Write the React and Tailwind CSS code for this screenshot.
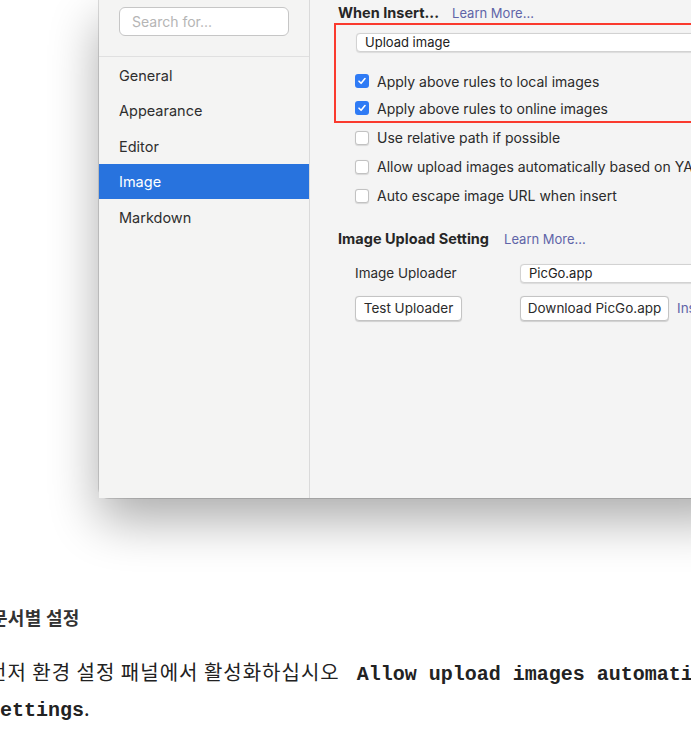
import React from "react";

function Check({ checked }) {
  if (checked) {
    return (
      <div className="w-[14px] h-[14px] rounded-[3px] bg-[#2f7bf5] flex items-center justify-center shrink-0">
        <svg width="10" height="10" viewBox="0 0 10 10" fill="none">
          <path d="M2 5.2 L4.1 7.3 L8 2.6" stroke="white" strokeWidth="1.6" strokeLinecap="round" strokeLinejoin="round" />
        </svg>
      </div>
    );
  }
  return <div className="w-[14px] h-[14px] rounded-[3px] bg-white border border-[#c2c2c2] shadow-[0_0.5px_1px_rgba(0,0,0,0.12)] shrink-0" />;
}

function Row({ checked, label, h, pl }) {
  return (
    <div className={`flex items-center gap-[8px] ${h} ${pl}`}>
      <Check checked={checked} />
      <span className="text-[14px] text-[#2b2b2b] whitespace-nowrap">{label}</span>
    </div>
  );
}

export default function App() {
  const items = ["General", "Appearance", "Editor", "Image", "Markdown"];
  return (
    <div className="w-[691px] h-[729px] overflow-hidden bg-white relative font-['Inter',sans-serif]">
      <div className="ml-[99px] w-[640px] h-[498px] flex bg-[#f4f4f4] rounded-bl-[10px] shadow-[0_22px_50px_rgba(0,0,0,0.33),0_0_0_1px_rgba(0,0,0,0.13)]">
        {/* Sidebar */}
        <div className="w-[211px] shrink-0 border-r border-[#dadada] bg-[#f4f4f3] flex flex-col">
          <div className="pt-[7px] pl-[20px]">
            <div className="w-[170px] h-[29px] rounded-[6px] border border-[#c6c6c6] bg-white pl-[12px] flex items-center text-[14px] text-[#b5b5b5]">
              Search for...
            </div>
          </div>
          <div className="mt-[20px] border-t border-[#e0e0e0]" />
          <div className="flex flex-col">
            {items.map((it) => (
              <div
                key={it}
                className={
                  it === "Image"
                    ? "h-[35.5px] pl-[20px] pt-[2px] flex items-center text-[14.5px] bg-[#2873de] text-white"
                    : "h-[35.5px] pl-[20px] pt-[2px] flex items-center text-[14.5px] text-[#2e2e2e]"
                }
              >
                {it}
              </div>
            ))}
          </div>
        </div>

        {/* Content */}
        <div className="flex-1 pl-[28px] pt-[4px] flex flex-col">
          <div className="flex items-baseline h-[17px] leading-[17px]">
            <span className="text-[14.5px] font-bold text-[#262626]">When Insert...</span>
            <span className="ml-[13px] text-[13px] text-[#6064a8]">Learn More...</span>
          </div>

          <div className="mt-[2px] ml-[-4px] border-2 border-[#fa3a2e] pt-[8px] flex flex-col">
            <div className="ml-[20px] h-[19px] w-[500px] bg-white border border-[#d2d2d2] rounded-[4px] shadow-[0_0.5px_1px_rgba(0,0,0,0.1)] pl-[8px] flex items-center text-[13px] text-[#222]">
              Upload image
            </div>
            <div className="mt-[15px]">
              <Row checked label="Apply above rules to local images" h="h-[28px]" pl="pl-[19px]" />
              <Row checked label="Apply above rules to online images" h="h-[26px]" pl="pl-[19px]" />
            </div>
          </div>

          <Row label="Use relative path if possible" h="h-[29px]" pl="pl-[17px]" />
          <Row label="Allow upload images automatically based on YAML" h="h-[29px]" pl="pl-[17px]" />
          <Row label="Auto escape image URL when insert" h="h-[29px]" pl="pl-[17px]" />

          <div className="mt-[19px] flex items-baseline h-[20px] leading-[20px]">
            <span className="text-[14.5px] font-bold text-[#262626]">Image Upload Setting</span>
            <span className="ml-[15px] text-[13px] text-[#6064a8]">Learn More...</span>
          </div>

          <div className="mt-[15px] h-[19px] flex items-center pl-[17px]">
            <span className="w-[165px] shrink-0 text-[13.5px] text-[#2b2b2b]">Image Uploader</span>
            <div className="h-[19px] w-[300px] shrink-0 bg-white border border-[#d2d2d2] rounded-[4px] shadow-[0_0.5px_1px_rgba(0,0,0,0.1)] pl-[8px] flex items-center text-[13px] text-[#222]">
              PicGo.app
            </div>
          </div>

          <div className="mt-[13px] flex items-center pl-[17px]">
            <div className="w-[107px] h-[25px] shrink-0 bg-white border border-[#c4c4c4] rounded-[4px] shadow-[0_0.5px_1px_rgba(0,0,0,0.15)] flex items-center justify-center text-[13.5px] text-[#2b2b2b]">
              Test Uploader
            </div>
            <div className="ml-[58px] w-[149px] h-[25px] shrink-0 bg-white border border-[#c4c4c4] rounded-[4px] shadow-[0_0.5px_1px_rgba(0,0,0,0.15)] flex items-center justify-center text-[13.5px] text-[#2b2b2b]">
              Download PicGo.app
            </div>
            <span className="ml-[8px] text-[13.5px] text-[#6064a8] whitespace-nowrap">Install PicGo</span>
          </div>
        </div>
      </div>

      {/* Document text */}
      <div className="whitespace-nowrap">
        <div className="ml-[-9px] mt-[107px] h-[24px] leading-[24px] text-[18px] font-bold text-[#333] tracking-[0.3px] font-['Noto_Sans_CJK_KR',sans-serif]">
          문서별 설정
        </div>
        <p className="ml-[-12px] mt-[26px] leading-[33px] text-[20px] text-[#222] font-['Noto_Sans_CJK_KR',sans-serif] font-normal tracking-[1px]">
          먼저 환경 설정 패널에서 활성화하십시오
          <code className="ml-[17px] font-['Liberation_Mono',monospace] font-bold text-[20px] tracking-normal text-[#222]">
            Allow upload images automatically based on YAML
          </code>
          <br />
          <code className="font-['Liberation_Mono',monospace] font-bold text-[20px] tracking-normal text-[#222]">Settings</code>
          <span className="tracking-normal">.</span>
        </p>
      </div>
    </div>
  );
}
